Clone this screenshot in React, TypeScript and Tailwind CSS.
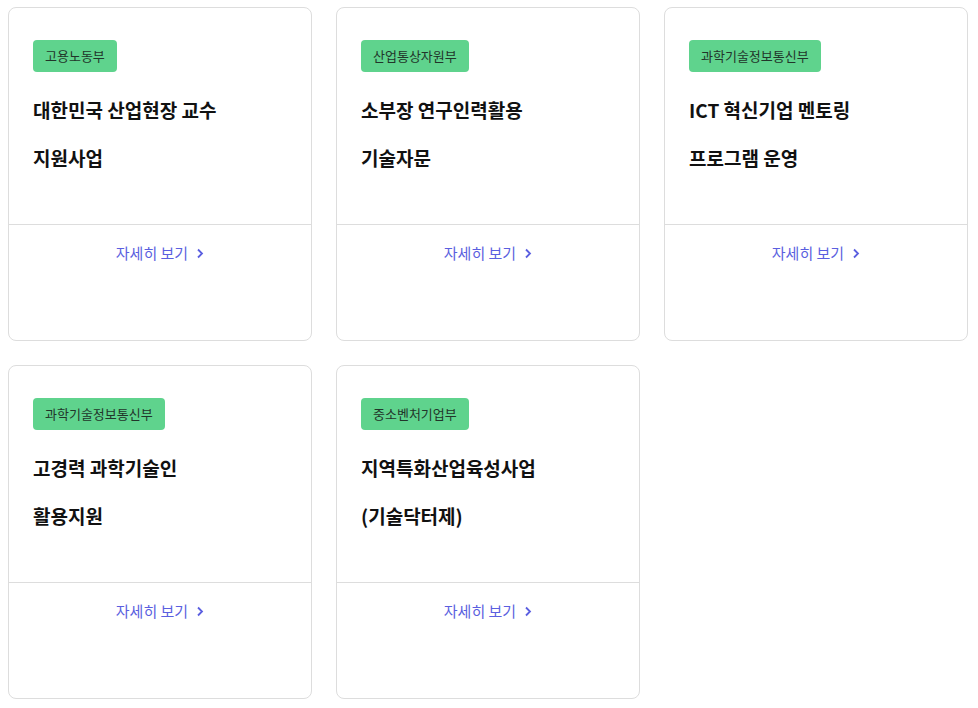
import React from "react";

const cards = [
  { tag: "고용노동부", lines: ["대한민국 산업현장 교수", "지원사업"] },
  { tag: "산업통상자원부", lines: ["소부장 연구인력활용", "기술자문"] },
  { tag: "과학기술정보통신부", lines: ["ICT 혁신기업 멘토링", "프로그램 운영"] },
  { tag: "과학기술정보통신부", lines: ["고경력 과학기술인", "활용지원"] },
  { tag: "중소벤처기업부", lines: ["지역특화산업육성사업", "(기술닥터제)"] },
];

export default function App() {
  return (
    <div
      className="bg-white w-[978px] h-[708px] pt-[7px] px-2"
      style={{ fontFamily: '"Noto Sans CJK KR", "Noto Sans", sans-serif' }}
    >
      <div className="grid grid-cols-3 gap-x-[24px] gap-y-[24px] w-[960px]">
        {cards.map((c, i) => (
          <div
            key={i}
            className="h-[334px] border border-[#dddddd] rounded-[8px] flex flex-col bg-white"
          >
            <div className="px-6 pt-8 h-[217px] border-b border-[#dddddd]">
              <span className="inline-flex items-center h-8 px-3 rounded-[4px] bg-[#5fd38d] text-[13px] text-[#22352a]">
                {c.tag}
              </span>
              <div className="mt-[14px] text-[19px] font-semibold leading-[48px] text-[#111111]">
                {c.lines.map((l, j) => (
                  <div key={j}>{l}</div>
                ))}
              </div>
            </div>
            <div className="pt-4 flex justify-center">
              <a className="flex items-center gap-[8px] text-[15px] leading-6 text-[#5b5fe0]">
                <span>자세히 보기</span>
                <svg width="8" height="11" viewBox="0 0 8 11" fill="none">
                  <path d="M2 1.5 L6 5.5 L2 9.5" stroke="#5b5fe0" strokeWidth="1.8" />
                </svg>
              </a>
            </div>
          </div>
        ))}
      </div>
    </div>
  );
}
